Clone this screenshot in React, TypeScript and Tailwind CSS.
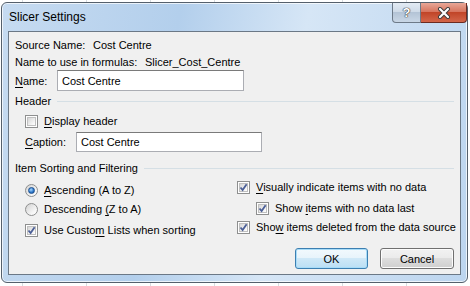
import React from 'react'

const font = { fontFamily: '"Liberation Sans", Arial, sans-serif' }

function U({ children }: { children: React.ReactNode }) {
  return <span className="underline underline-offset-[2px] decoration-[1px]">{children}</span>
}

function CheckBox({ checked }: { checked?: boolean }) {
  return (
    <span className="relative flex h-[13px] w-[13px] shrink-0 items-center justify-center border border-[#8e8f8f] bg-white">
      <span className="absolute inset-[1px] border border-[#c0c0c0] bg-[linear-gradient(135deg,#d6d6d6,#f4f4f4_70%,#ffffff)]" />
      {checked && (
        <svg viewBox="0 0 11 11" className="relative h-[11px] w-[11px]">
          <path d="M2.5 5.5 L4.6 8 L8.6 2.2" fill="none" stroke="#4b5f97" strokeWidth="1.8" />
        </svg>
      )}
    </span>
  )
}

function Radio({ checked }: { checked?: boolean }) {
  return (
    <span className="relative flex h-[13px] w-[13px] shrink-0 items-center justify-center rounded-full border border-[#8e8f8f] bg-[linear-gradient(135deg,#d2d2d2,#f6f6f6_70%,#ffffff)]">
      {checked && (
        <span className="h-[7px] w-[7px] rounded-full border border-[#1c4f8f] bg-[radial-gradient(circle_at_40%_35%,#a8d8ff,#2a75c8_60%,#1b4f94)]" />
      )}
    </span>
  )
}

function TextInput({ value, width }: { value: string; width: string }) {
  return (
    <div className={`${width} flex h-full items-center border border-[#abadb3] border-t-[#7a7a7a] bg-white pl-[4px]`}>
      {value}
    </div>
  )
}

function GroupLabel({ children }: { children: React.ReactNode }) {
  return (
    <div className="flex h-[18px] items-center gap-[6px] pr-[6px]">
      <span>{children}</span>
      <span className="mt-[1px] h-px flex-1 bg-[#d5dfe5]" />
    </div>
  )
}

function Row({ children, className = '' }: { children: React.ReactNode; className?: string }) {
  return <div className={`flex h-[18px] items-center gap-[6px] ${className}`}>{children}</div>
}

export default function App() {
  return (
    <div
      className="h-[286px] w-[470px] overflow-hidden whitespace-nowrap bg-white bg-[linear-gradient(to_right,#d8dce0_1px,transparent_1px)] bg-[length:64px_100%] bg-[position:22px_0] pt-[2px] pl-[1px] text-[11px] leading-[14px] text-black"
      style={font}
    >
      {/* window frame */}
      <div className="flex h-[281px] w-[467px] flex-col rounded-[6px] border border-[#55606c] bg-[linear-gradient(100deg,#c6dbf1,#b3cfec_35%,#d6e6f6_60%,#bcd5ef)] shadow-[inset_0_0_0_1px_rgba(255,255,255,0.7)]">
        {/* title bar */}
        <div className="flex h-[28px] items-start pl-[7px]">
          <div className="mt-[7px] text-[12px] text-black">Slicer Settings</div>
          <div className="ml-auto flex h-[20px]">
            <div className="flex w-[29px] items-center justify-center rounded-bl-[4px] border border-t-0 border-[#6d7a88] bg-[linear-gradient(to_bottom,#e3ebf4,#cfdbe8_45%,#b4c4d6_50%,#c9d7e6)] text-[13px] font-bold leading-none text-white [text-shadow:0_0_1px_#333,0_0_1px_#333,0_0_1px_#333]">
              ?
            </div>
            <div className="flex w-[46px] items-center justify-center rounded-br-[4px] border border-t-0 border-l-0 border-[#6b2a20] bg-[linear-gradient(to_bottom,#e8a797,#d77660_45%,#c14528_50%,#d3664a)]">
              <svg viewBox="0 0 14 12" className="h-[12px] w-[14px]">
                <path d="M3 2 L11 10 M11 2 L3 10" stroke="#3a3a3a" strokeWidth="4" strokeLinecap="round" />
                <path d="M3 2 L11 10 M11 2 L3 10" stroke="#ffffff" strokeWidth="2.2" strokeLinecap="round" />
              </svg>
            </div>
          </div>
        </div>

        {/* client area */}
        <div className="mx-[6px] flex flex-1 flex-col border border-[#6b7886] bg-[#f0f0f0] pl-[6px]">
          <div className="mt-[4px] flex h-[17px] items-center">
            <span className="w-[78px]">Source Name:</span>
            <span>Cost Centre</span>
          </div>
          <div className="flex h-[17px] items-center">
            <span className="w-[130px]">Name to use in formulas:</span>
            <span>Slicer_Cost_Centre</span>
          </div>
          <div className="flex h-[21px] items-center">
            <span className="w-[42px]">
              <U>N</U>ame:
            </span>
            <TextInput value="Cost Centre" width="w-[187px]" />
          </div>

          <div className="mt-[1px]">
            <GroupLabel>Header</GroupLabel>
          </div>
          <Row className="mt-[2px] pl-[10px]">
            <CheckBox />
            <span>
              <U>D</U>isplay header
            </span>
          </Row>
          <div className="mt-[2px] flex h-[20px] items-center pl-[10px]">
            <span className="w-[51px]">
              <U>C</U>aption:
            </span>
            <TextInput value="Cost Centre" width="w-[186px]" />
          </div>

          <div className="mt-[7px]">
            <GroupLabel>Item Sorting and Filtering</GroupLabel>
          </div>

          <div className="flex">
            <div className="flex w-[222px] flex-col pl-[10px] pt-[4px]">
              <Row>
                <Radio checked />
                <span>
                  <U>A</U>scending (A to Z)
                </span>
              </Row>
              <Row className="mt-[1px]">
                <Radio />
                <span>
                  Descending <U>(</U>Z to A)
                </span>
              </Row>
              <Row className="mt-[3px]">
                <CheckBox checked />
                <span>
                  Use Custo<U>m</U> Lists when sorting
                </span>
              </Row>
            </div>
            <div className="flex flex-col pt-[1px]">
              <Row>
                <CheckBox checked />
                <span>
                  <U>V</U>isually indicate items with no data
                </span>
              </Row>
              <Row className="mt-[3px] pl-[19px]">
                <CheckBox checked />
                <span>
                  Show <U>i</U>tems with no data last
                </span>
              </Row>
              <Row className="mt-[1px]">
                <CheckBox checked />
                <span>
                  Sho<U>w</U> items deleted from the data source
                </span>
              </Row>
            </div>
          </div>

          <div className="mt-[9px] flex justify-end gap-[12px] pr-[6px]">
            <button className="h-[21px] w-[73px] rounded-[3px] border border-[#3c7fb1] bg-[linear-gradient(to_bottom,#f2f9fd,#e8f4fb_45%,#cfe8f7_50%,#bbdff4)] shadow-[inset_0_0_0_1px_#a8dcf8]">
              OK
            </button>
            <button className="h-[21px] w-[74px] rounded-[3px] border border-[#707070] bg-[linear-gradient(to_bottom,#f2f2f2,#ebebeb_45%,#dddddd_50%,#cfcfcf)] shadow-[inset_0_0_0_1px_#fcfcfc]">
              Cancel
            </button>
          </div>
        </div>
        <div className="h-[7px]" />
      </div>
    </div>
  )
}
